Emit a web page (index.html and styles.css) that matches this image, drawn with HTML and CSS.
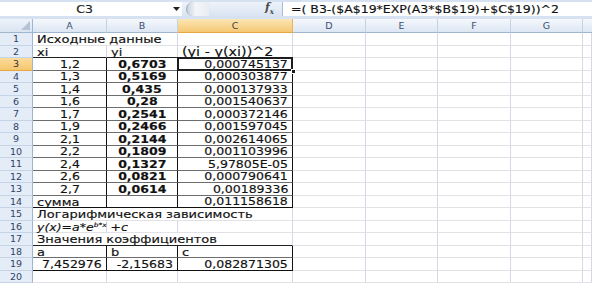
FILE: index.html
```html
<!DOCTYPE html>
<html>
<head>
<meta charset="utf-8">
<link rel="stylesheet" href="styles.css">
</head>
<body>
<div class="fbar">
  <div class="namebox"><span class="t">C3</span></div>
  <div class="dd"><svg width="7" height="4" viewBox="0 0 7 4"><path d="M0 0H7L3.5 4Z" fill="#222"/></svg></div>
  <div class="fxzone"><div class="pill"></div><span class="fx">f<sub>x</sub></span></div>
  <div class="formula"><span class="t l">=( B3-($A$19*EXP(A3*$B$19)+$C$19))^2</span></div>
</div>
<div class="sheet">
  <div class="corner"><svg width="9" height="9" viewBox="0 0 9 9"><path d="M9 0V9H0Z" fill="#b4c3d6"/></svg></div>
  <div class="ch">A</div><div class="ch">B</div><div class="ch sel">C</div><div class="ch">D</div><div class="ch">E</div><div class="ch">F</div><div class="ch">G</div><div class="ch last"></div>

  <div class="rh">1</div><div class="c l tx span2"><span class="t">Исходные данные</span></div><div class="c"></div><div class="c"></div><div class="c"></div><div class="c"></div><div class="c"></div><div class="c"></div>

  <div class="rh">2</div><div class="c l tx kb"><span class="t">xi</span></div><div class="c l tx kb"><span class="t">yi</span></div><div class="c l kb big"><span class="t">(yi - y(xi))^2</span></div><div class="c kl"></div><div class="c"></div><div class="c"></div><div class="c"></div><div class="c"></div>

  <div class="rh sel">3</div><div class="c m k"><span class="t">1,2</span></div><div class="c m k b"><span class="t">0,6703</span></div><div class="c r k active"><span class="t">0,000745137</span></div><div class="c"></div><div class="c"></div><div class="c"></div><div class="c"></div><div class="c"></div>

  <div class="rh">4</div><div class="c m k"><span class="t">1,3</span></div><div class="c m k b"><span class="t">0,5169</span></div><div class="c r k"><span class="t">0,000303877</span></div><div class="c"></div><div class="c"></div><div class="c"></div><div class="c"></div><div class="c"></div>

  <div class="rh">5</div><div class="c m k"><span class="t">1,4</span></div><div class="c m k b"><span class="t">0,435</span></div><div class="c r k"><span class="t">0,000137933</span></div><div class="c"></div><div class="c"></div><div class="c"></div><div class="c"></div><div class="c"></div>

  <div class="rh">6</div><div class="c m k"><span class="t">1,6</span></div><div class="c m k b"><span class="t">0,28</span></div><div class="c r k"><span class="t">0,001540637</span></div><div class="c"></div><div class="c"></div><div class="c"></div><div class="c"></div><div class="c"></div>

  <div class="rh">7</div><div class="c m k"><span class="t">1,7</span></div><div class="c m k b"><span class="t">0,2541</span></div><div class="c r k"><span class="t">0,000372146</span></div><div class="c"></div><div class="c"></div><div class="c"></div><div class="c"></div><div class="c"></div>

  <div class="rh">8</div><div class="c m k"><span class="t">1,9</span></div><div class="c m k b"><span class="t">0,2466</span></div><div class="c r k"><span class="t">0,001597045</span></div><div class="c"></div><div class="c"></div><div class="c"></div><div class="c"></div><div class="c"></div>

  <div class="rh">9</div><div class="c m k"><span class="t">2,1</span></div><div class="c m k b"><span class="t">0,2144</span></div><div class="c r k"><span class="t">0,002614065</span></div><div class="c"></div><div class="c"></div><div class="c"></div><div class="c"></div><div class="c"></div>

  <div class="rh">10</div><div class="c m k"><span class="t">2,2</span></div><div class="c m k b"><span class="t">0,1809</span></div><div class="c r k"><span class="t">0,001103996</span></div><div class="c"></div><div class="c"></div><div class="c"></div><div class="c"></div><div class="c"></div>

  <div class="rh">11</div><div class="c m k"><span class="t">2,4</span></div><div class="c m k b"><span class="t">0,1327</span></div><div class="c r k"><span class="t">5,97805E-05</span></div><div class="c"></div><div class="c"></div><div class="c"></div><div class="c"></div><div class="c"></div>

  <div class="rh">12</div><div class="c m k"><span class="t">2,6</span></div><div class="c m k b"><span class="t">0,0821</span></div><div class="c r k"><span class="t">0,000790641</span></div><div class="c"></div><div class="c"></div><div class="c"></div><div class="c"></div><div class="c"></div>

  <div class="rh">13</div><div class="c m k"><span class="t">2,7</span></div><div class="c m k b"><span class="t">0,0614</span></div><div class="c r k"><span class="t">0,00189336</span></div><div class="c"></div><div class="c"></div><div class="c"></div><div class="c"></div><div class="c"></div>

  <div class="rh">14</div><div class="c l tx k kbb"><span class="t">сумма</span></div><div class="c k kbb"></div><div class="c r k kbb"><span class="t">0,011158618</span></div><div class="c"></div><div class="c"></div><div class="c"></div><div class="c"></div><div class="c"></div>

  <div class="rh">15</div><div class="c l tx span3"><span class="t">Логарифмическая зависимость</span></div><div class="c"></div><div class="c"></div><div class="c"></div><div class="c"></div><div class="c"></div>

  <div class="rh">16</div><div class="c l tx it"><span class="t">y(x)=a*e<sup>b*x</sup> +c</span></div><div class="c"></div><div class="c"></div><div class="c"></div><div class="c"></div><div class="c"></div><div class="c"></div><div class="c"></div>

  <div class="rh">17</div><div class="c l tx span3 kb"><span class="t">Значения коэффициентов</span></div><div class="c"></div><div class="c"></div><div class="c"></div><div class="c"></div><div class="c"></div>

  <div class="rh">18</div><div class="c l tx k"><span class="t">a</span></div><div class="c l tx k"><span class="t">b</span></div><div class="c l tx k"><span class="t">c</span></div><div class="c"></div><div class="c"></div><div class="c"></div><div class="c"></div><div class="c"></div>

  <div class="rh">19</div><div class="c r k kbb"><span class="t">7,452976</span></div><div class="c r k kbb"><span class="t">-2,15683</span></div><div class="c r k kbb"><span class="t">0,082871305</span></div><div class="c"></div><div class="c"></div><div class="c"></div><div class="c"></div><div class="c"></div>

  <div class="rh">20</div><div class="c"></div><div class="c"></div><div class="c"></div><div class="c"></div><div class="c"></div><div class="c"></div><div class="c"></div><div class="c"></div>
</div>
</body>
</html>
```
FILE: styles.css
```css
html, body {
  margin: 0;
  padding: 0;
}
body {
  width: 592px;
  height: 283px;
  overflow: hidden;
  background: #ffffff;
  font-family: "DejaVu Sans", "Verdana", sans-serif;
  font-size: 10px;
  color: #111;
}
.t {
  display: inline-block;
  white-space: nowrap;
  transform: scaleX(1.25);
  transform-origin: center;
  -webkit-text-stroke: 0.15px currentColor;
}
.fbar {
  display: flex;
  height: 19px;
  box-sizing: border-box;
  padding: 2px 0 3px;
  background: #d6e2f2;
}
.namebox {
  width: 170px;
  background: #fff;
  display: flex;
  align-items: center;
  justify-content: center;
  color: #222;
}
.dd {
  width: 12px;
  background: #fff;
  display: flex;
  align-items: center;
  justify-content: center;
}
.fxzone {
  width: 100px;
  box-sizing: border-box;
  display: flex;
  align-items: center;
  justify-content: space-between;
  padding: 0 8px 0 4px;
  background: linear-gradient(#eef3fa, #d9e4f2);
}
.pill {
  width: 22px;
  height: 14px;
  border-radius: 7px 0 0 7px;
  background: linear-gradient(90deg, #c9d3df, #f4f6f9 40%, #e9edf2);
  border-left: 1px solid #9aa9bb;
}
.fx {
  font-family: "DejaVu Serif", serif;
  font-style: italic;
  font-weight: bold;
  font-size: 11px;
  color: #4a4a4a;
}
.fx sub {
  font-size: 7px;
}
.formula {
  flex: 1;
  background: #fff;
  border-left: 1px solid #a9bdd6;
  display: flex;
  align-items: center;
  padding-left: 8px;
  color: #111;
}
.formula .t {
  transform-origin: left center;
}
.sheet {
  display: grid;
  grid-template-columns: 33px 74px 71px 115px 73px 72px 73px 72px 9px;
  grid-template-rows: 14px repeat(20, 12.5px);
}
.sheet > div {
  box-sizing: border-box;
  display: flex;
  align-items: center;
  overflow: visible;
  position: relative;
}
.corner {
  background: linear-gradient(#eef3fa, #dae4f2);
  border-right: 1px solid #9eb6ce;
  border-bottom: 1px solid #9eb6ce;
  justify-content: flex-end;
  align-items: flex-end !important;
  padding: 0 2px 2px 0;
}
.corner svg {
  display: block;
}
.ch {
  justify-content: center;
  background: linear-gradient(#f5f8fc, #dce6f3);
  border-right: 1px solid #c3d1e4;
  border-bottom: 1px solid #9eb6ce;
  color: #3a4f72;
  font-size: 9.5px;
}
.ch.sel {
  background: linear-gradient(#fbe6b4, #f5c874);
  border-right-color: #f0b352;
  border-bottom-color: #e9a640;
  color: #3c3c3c;
}
.ch.last {
  border-right: none;
}
.rh {
  justify-content: center;
  background: #e4ecf7;
  border-right: 1px solid #9eb6ce;
  border-bottom: 1px solid #c5d3e6;
  color: #2e4367;
  font-size: 9.5px;
}
.rh.sel {
  background: linear-gradient(#fbdc9b, #f6c66f);
  border-bottom-color: #e9a640;
  color: #333;
}
.c {
  border-right: 1px solid #d3d7e6;
  border-bottom: 1px solid #e2e2e6;
  padding-top: 1px;
}
.c.l {
  justify-content: flex-start;
  padding-left: 4px;
}
.c.tx {
  font-size: 10.4px;
}
.c.l .t {
  transform-origin: left center;
}
.c.r {
  justify-content: flex-end;
  padding-right: 4px;
}
.c.r .t {
  transform-origin: right center;
}
.c.m {
  justify-content: center;
}
.c.b {
  font-weight: bold;
}
.c.big {
  font-size: 11.5px;
  padding-top: 1px;
}
.c.it {
  font-style: italic;
  font-size: 10px;
}
.c.it sup {
  font-size: 6px;
  vertical-align: 4px;
}
.span2 {
  grid-column: span 2;
}
.span3 {
  grid-column: span 3;
}
.c.k {
  border-right: 1px solid #111;
  border-bottom: 1px solid #6d6d6d;
}
.c.kb {
  border-bottom: 1px solid #222;
}
.c.kbb {
  border-bottom: 1px solid #111;
}
.active::after {
  content: "";
  position: absolute;
  left: -1px;
  top: -1px;
  right: -1px;
  bottom: -1px;
  border: 2px solid #1d1d1d;
  pointer-events: none;
}
.active::before {
  content: "";
  position: absolute;
  right: -4px;
  bottom: -4px;
  width: 5px;
  height: 5px;
  background: #1d1d1d;
  border: 1px solid #fff;
  box-sizing: border-box;
  z-index: 2;
}
```
